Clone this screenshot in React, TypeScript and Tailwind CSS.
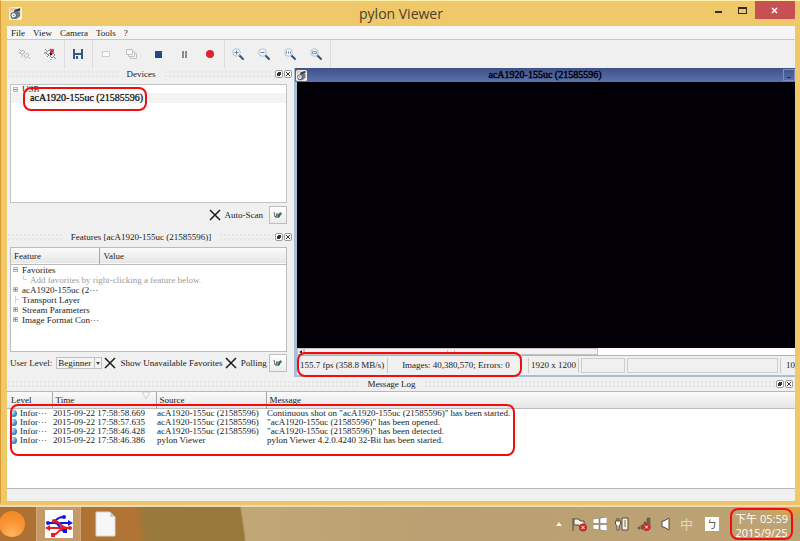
import type { ReactNode } from 'react';

const features = [
  { mark: '-', name: 'Favorites' },
  { mark: '+', name: 'acA1920-155uc (2···' },
  { mark: '', name: 'Transport Layer' },
  { mark: '+', name: 'Stream Parameters' },
  { mark: '+', name: 'Image Format Con···' },
];

const messages = [
  { time: '2015-09-22 17:58:58.669', source: 'acA1920-155uc (21585596)', text: 'Continuous shot on "acA1920-155uc (21585596)" has been started.' },
  { time: '2015-09-22 17:58:57.635', source: 'acA1920-155uc (21585596)', text: '"acA1920-155uc (21585596)" has been opened.' },
  { time: '2015-09-22 17:58:46.428', source: 'acA1920-155uc (21585596)', text: '"acA1920-155uc (21585596)" has been detected.' },
  { time: '2015-09-22 17:58:46.386', source: 'pylon Viewer', text: 'pylon Viewer 4.2.0.4240 32-Bit has been started.' },
];

function CameraIcon({ className }: { className: string }) {
  return (
    <svg viewBox="0 0 14 14" className={className} aria-hidden="true">
      <rect width="14" height="14" rx="2" fill="#f7efe2" />
      <path d="M1 1h7L1 6z" fill="#f1c79a" />
      <path d="M2 7l4-2h6v5l-4 3H3z" fill="#6b7a87" />
      <path d="M6 3l6-2v3l-3 1H5z" fill="#35414c" />
      <circle cx="5" cy="9" r="3" fill="#f2f6f9" stroke="#3c4954" />
      <circle cx="5" cy="9" r="1" fill="#7d92a4" />
    </svg>
  );
}

function ConnectIcon({ active }: { active?: boolean }) {
  return (
    <svg viewBox="0 0 14 14" className="size-3.5" fill="none" aria-hidden="true">
      <path d="M2 2l2 2M3 6l3-3 2 2-3 3zM7 9l3-3 2 2-3 3zM11 10l2 2" stroke={active ? '#8b9299' : '#b3b7bb'} />
      <path d="M4 10l2-2M1 6h2M8 12v1" stroke={active ? '#6c757d' : '#c2c5c8'} />
      {active && <path d="M7 2l3 3M10 2v3H7" stroke="#d22032" strokeWidth="1.5" />}
      {active && <circle cx="8" cy="7" r="1.3" fill="#20242a" />}
    </svg>
  );
}

function ZoomIcon({ sign }: { sign: string }) {
  return (
    <svg viewBox="0 0 14 14" className="size-3.5" fill="none" aria-hidden="true">
      <path d="M8.5 8.5 12 12" stroke="#2f567f" strokeWidth="2" strokeLinecap="round" />
      <circle cx="5.5" cy="5.5" r="3.8" fill="#eef4f8" stroke="#b5c3ce" />
      {sign === '+' && <path d="M3.5 5.5h4M5.5 3.5v4" stroke="#5f86ad" />}
      {sign === '-' && <path d="M3.5 5.5h4" stroke="#5f86ad" />}
      {sign === '1' && <path d="M3 5.5h1M5 5.5h1M7 5.5h1" stroke="#5f86ad" strokeWidth="2" />}
      {sign === 'fit' && <path d="M3.5 4.5h4v2h-4z" stroke="#7c9ab5" />}
    </svg>
  );
}

function ToolButton({ label, children }: { label: string; children: ReactNode }) {
  return (
    <button type="button" aria-label={label} className="flex h-6 w-[26px] items-center justify-center">
      {children}
    </button>
  );
}

function Separator() {
  return <span className="ml-px w-px self-stretch bg-[#dcdcdc]" />;
}

function Grip() {
  return <span className="h-2 flex-1 bg-[radial-gradient(#e5e5e5_1px,transparent_1px)] bg-[size:4px_4px]" />;
}

function DockButtons() {
  return (
    <span className="flex gap-px">
      <button type="button" aria-label="Float" className="flex size-2 items-center justify-center rounded-xs border border-[#9a9a9a] bg-white">
        <svg viewBox="0 0 6 6" className="size-1.5" aria-hidden="true"><path d="M2 1h3v3H4v1H1V2h1z" fill="#333" /></svg>
      </button>
      <button type="button" aria-label="Close panel" className="flex size-2 items-center justify-center rounded-xs border border-[#9a9a9a] bg-white">
        <svg viewBox="0 0 6 6" className="size-1.5" aria-hidden="true"><path d="M1 1l4 4M5 1 1 5" stroke="#333" /></svg>
      </button>
    </span>
  );
}

function DockTitle({ title }: { title: string }) {
  return (
    <div className="flex h-3 items-center pr-0.5">
      <Grip />
      <h2 className="px-2">{title}</h2>
      <Grip />
      <DockButtons />
    </div>
  );
}

function CrossCheck({ label }: { label: string }) {
  return (
    <label className="flex items-center gap-1 whitespace-nowrap">
      <span className="relative size-3">
        <input type="checkbox" defaultChecked className="peer block size-3 appearance-none" />
        <svg viewBox="0 0 12 12" className="pointer-events-none absolute inset-0 hidden size-3 peer-checked:block" aria-hidden="true">
          <path d="M1 1l10 10M11 1 1 11" stroke="#1c1c1c" strokeWidth="1.5" />
        </svg>
      </span>
      {label}
    </label>
  );
}

function RefreshButton({ label }: { label: string }) {
  return (
    <button type="button" aria-label={label} className="flex size-[18px] items-center justify-center border border-[#bdbdbd] bg-linear-to-b from-white to-[#ececec]">
      <svg viewBox="0 0 10 10" className="size-2.5" aria-hidden="true">
        <path d="M1 2l1 5 2-1V3M3 8l1-4" stroke="#5c6660" fill="none" />
        <path d="M5 4l3-2 1 2-2 2-1 2H4z" fill="#4b8f5c" />
        <path d="M6 4h2M5 6h2" stroke="#33473a" />
      </svg>
    </button>
  );
}

function TreeMark({ mark }: { mark: string }) {
  return (
    <svg viewBox="0 0 7 7" className="size-[7px] shrink-0" fill="none" aria-hidden="true">
      {mark === '' ? (
        <path d="M3.5 0v7M3.5 3.5H7" stroke="#d5d5d5" />
      ) : (
        <>
          <rect x="1.500" y="1.500" width="4" height="4" fill="#f6f6f6" stroke="#b8b8b8" />
          <path d={mark === '+' ? 'M2 3.5h3M3.5 2v3' : 'M2 3.5h3'} stroke="#888" />
        </>
      )}
    </svg>
  );
}

function Devices() {
  return (
    <section className="flex flex-1 flex-col">
      <DockTitle title="Devices" />
      <ul className="mt-1 mr-[7px] ml-[3px] flex-1 border border-[#c4c4c4] bg-white">
        <li>
          <span className="flex h-2 items-center gap-[3px] pl-px">
            <TreeMark mark="-" />USB
          </span>
          <ul>
            <li className="relative h-[10px] bg-[#f3f3f3] pl-[19px] text-[10px] text-black [-webkit-text-stroke:0.2px_black]">
              acA1920-155uc (21585596)
              <span className="pointer-events-none absolute -top-1.5 left-3 h-6 w-[124px] rounded-lg border-2 border-[#f20d0d]" />
            </li>
          </ul>
        </li>
      </ul>
      <div className="mr-[7px] flex h-6 items-center justify-end gap-1.5">
        <CrossCheck label="Auto-Scan" />
        <RefreshButton label="Refresh devices" />
      </div>
    </section>
  );
}

function Features() {
  return (
    <section className="pt-1 pb-[3px]">
      <DockTitle title="Features [acA1920-155uc (21585596)]" />
      <div className="mt-1 mr-[7px] ml-[3px] min-h-[105px] border border-[#bcbcbc] bg-white">
        <table className="w-full table-fixed border-collapse text-left">
          <thead>
            <tr className="h-4 border-b border-[#bcbcbc] bg-linear-to-b from-[#fafafa] to-[#e6e6e6]">
              <th className="w-[88px] border-r border-[#a8a8a8] p-0 pl-[3px] font-normal">Feature</th>
              <th className="p-0 pl-1 font-normal">Value</th>
            </tr>
          </thead>
          <tbody>
            {features.map((feature) => [
              <tr key={feature.name} className="h-[10px]">
                <td colSpan={2} className="p-0">
                  <span className="flex items-center gap-[3px] pl-px"><TreeMark mark={feature.mark} />{feature.name}</span>
                </td>
              </tr>,
              feature.name === 'Favorites' && (
                <tr key="hint" className="h-[10px] text-[#9b9b9b]">
                  <td colSpan={2} className="p-0">
                    <span className="flex items-center gap-[3px] pl-3">
                      <span className="-mt-1 h-1 w-1 border-b border-l border-[#d0d0d0]" />
                      Add favorites by right-clicking a feature below.
                    </span>
                  </td>
                </tr>
              ),
            ])}
          </tbody>
        </table>
      </div>
      <div className="mr-[7px] ml-[3px] flex h-[22px] items-center justify-between">
        <label className="flex items-center gap-1 whitespace-nowrap">
          User Level:
          <span className="relative">
            <select className="block h-3 w-[46px] appearance-none border border-[#c0c0c0] bg-[#f4f4f4] pl-px leading-[10px]">
              <option>Beginner</option>
            </select>
            <span className="pointer-events-none absolute inset-y-0 right-0 flex w-2 items-center justify-center border border-[#c0c0c0] bg-[#f4f4f4]">
              <svg viewBox="0 0 4 3" className="h-[3px] w-1" aria-hidden="true"><path d="M0 0h4L2 3z" fill="#444" /></svg>
            </span>
          </span>
        </label>
        <CrossCheck label="Show Unavailable Favorites" />
        <CrossCheck label="Polling" />
        <RefreshButton label="Refresh features" />
      </div>
    </section>
  );
}

function ImageWindow() {
  return (
    <section className="flex min-w-0 flex-1 flex-col border-b-2 border-l-[3px] border-[#a5bfd8]">
      <header className="-ml-0.5 flex h-3.5 items-center bg-linear-to-b from-[#405088] to-[#5a73ae] pl-px text-black">
        <CameraIcon className="size-[11px]" />
        <h2 className="flex-1 text-center text-[10px] [-webkit-text-stroke:0.4px_black]">acA1920-155uc (21585596)</h2>
        <button type="button" aria-label="Minimize camera" className="flex h-3 w-3 items-end justify-center border border-[#7b8ec1] pb-0.5">
          <span className="h-px w-1 bg-[#1e2850]" />
        </button>
      </header>
      <div className="flex-1 bg-[#020006]" />
      <div className="flex h-[7px] bg-white">
        <span className="flex w-[7px] items-center justify-center border border-[#c4c4c4] bg-[#f2f2f2]">
          <svg viewBox="0 0 3 4" className="h-1 w-[3px]" aria-hidden="true"><path d="M3 0v4L0 2z" fill="#333" /></svg>
        </span>
        <span className="flex w-[59%] items-center justify-center border border-[#c4c4c4] bg-[#f2f2f2]">
          <span className="h-1 w-2 border-x border-dotted border-[#bbb]" />
        </span>
      </div>
      <footer className="relative flex h-5 items-stretch border-t border-[#9db9d2] bg-[#f0f0f0] py-0.5 whitespace-nowrap">
        <span className="w-[91px] shrink-0 border-r border-[#c9c9c9] pl-[3px] leading-[15px]">155.7 fps (358.8 MB/s)</span>
        <span className="w-[140px] shrink-0 pr-1 text-center leading-[15px]">Images: 40,380,570; Errors: 0</span>
        <span className="w-[51px] shrink-0 border-x border-[#c9c9c9] text-center leading-[15px]">1920 x 1200</span>
        <span className="ml-0.5 w-11 shrink-0 border border-[#cecece]" />
        <span className="ml-0.5 flex-1 border border-[#cecece]" />
        <span className="ml-0.5 shrink-0 border-l border-[#c9c9c9] pl-[5px] leading-[15px]">10</span>
        <span className="pointer-events-none absolute -top-1 left-0 h-[25px] w-[225px] rounded-lg border-2 border-[#f20d0d]" />
      </footer>
    </section>
  );
}

function MessageLog() {
  return (
    <section>
      <div className="pt-px">
        <DockTitle title="Message Log" />
      </div>
      <div className="relative mt-px min-h-[98px] border-t border-b border-[#b8b8b8] bg-white">
        <table className="w-full table-fixed border-collapse text-left">
          <thead>
            <tr className="h-4 border-b border-[#bcbcbc] bg-linear-to-b from-[#fafafa] to-[#e6e6e6] leading-4">
              <th className="w-[45px] border-r border-[#a8a8a8] p-0 pl-1 font-normal">Level</th>
              <th className="w-[104px] border-r border-[#a8a8a8] p-0 pl-[3px] font-normal">
                <span className="flex items-start justify-between pr-1.5">
                  Time
                  <svg viewBox="0 0 8 8" className="size-2" aria-hidden="true"><path d="M0 0h8L4 7z" fill="#f8f8f8" stroke="#ccc" /></svg>
                </span>
              </th>
              <th className="w-[110px] border-r border-[#a8a8a8] p-0 pl-[3px] font-normal">Source</th>
              <th className="p-0 pl-[3px] font-normal">Message</th>
            </tr>
          </thead>
          <tbody className="leading-[9px] whitespace-nowrap">
            {messages.map((message) => (
              <tr key={message.time}>
                <td className="p-0 pl-[3px]">
                  <span className="flex items-center gap-[3px]">
                    <span className="size-[7px] rounded-full bg-[radial-gradient(circle_at_30%_30%,#d8ecfa,#3577b5_70%)]" />
                    Infor···
                  </span>
                </td>
                <td className="p-0 pl-px">{message.time}</td>
                <td className="p-0 pl-px">{message.source}</td>
                <td className="p-0 pl-px">{message.text}</td>
              </tr>
            ))}
          </tbody>
        </table>
        <span className="pointer-events-none absolute top-3 left-[3px] h-[52px] w-[505px] rounded-lg border-2 border-[#f20d0d]" />
      </div>
      <div className="h-3" />
    </section>
  );
}

function Taskbar() {
  return (
    <footer className="flex h-9 items-center border-t-2 border-[#ead9c4] bg-[radial-gradient(ellipse_50px_12px_at_100%_0,#eba62e,transparent),linear-gradient(82deg,#ad7033_0,#b07433_138px,#9a793c_146px,#99783b_242px,#c0a775_244px,#b9a072_55%,#bda374_100%)]">
      <button type="button" aria-label="Media player" className="-ml-px size-[26px] rounded-full bg-[radial-gradient(circle_at_50%_90%,#ffb560,#fa9332_50%,#ee8526)]" />
      <button type="button" aria-label="pylon USB" className="ml-[11px] flex h-full w-[45px] items-center justify-center border-x border-[#d0a878] bg-[#c69a66]">
        <svg viewBox="0 0 28 28" className="size-7" fill="none" aria-hidden="true">
          <path d="M0 0h28v28H0z" fill="#fff" />
          <path d="M3 13h22M6 13c4 0 5-6 12-6M10 13c5 0 4 7 9 8" stroke="#1116e4" strokeWidth="2" />
          <path d="M3 18h22M22 18c-7 0-6-7-13-7M20 18c-6 0-6 6-12 7" stroke="#ef1920" strokeWidth="2" />
          <path d="M23 10l5 3-5 3zM18 19h4v4h-4z" fill="#1116e4" />
          <path d="M5 15l-5 3 5 3zM6 23h4v4H6z" fill="#ef1920" />
          <circle cx="3" cy="13" r="2" fill="#1116e4" />
          <circle cx="19" cy="7" r="2" fill="#1116e4" />
          <circle cx="25" cy="18" r="2" fill="#ef1920" />
          <circle cx="9" cy="11" r="2" fill="#ef1920" />
        </svg>
      </button>
      <button type="button" aria-label="Document" className="ml-[14px]">
        <svg viewBox="0 0 21 26" className="h-[26px] w-[21px]" aria-hidden="true">
          <path d="M1 1h14l5 5v19H1z" fill="#f7f7f7" stroke="#d9d4cc" />
          <path d="M15 1v5h5z" fill="#ccc" />
        </svg>
      </button>
      <div className="ml-auto flex items-center gap-2 pr-3">
        <svg viewBox="0 0 6 4" className="mr-0.5 h-1 w-1.5" aria-hidden="true"><path d="M3 0l3 4H0z" fill="#f6f2ea" /></svg>
        <svg viewBox="0 0 15 15" className="-mr-0.5 size-[15px]" fill="none" aria-hidden="true">
          <path d="M1 1v13M2 2h5l1 2h4v6H8L7 8H2z" fill="#f8f4ec" stroke="#554b3a" />
          <circle cx="11" cy="10.5" r="4" fill="#c92a2e" />
          <path d="M9.5 9l3 3M12.5 9l-3 3" stroke="#fff" />
        </svg>
        <svg viewBox="0 0 14 14" className="size-3.5" aria-hidden="true">
          <path d="M0 2l6-1v5.5H0zM7 1l7-1v6.500H7zM0 7.500h6V13l-6-1zM7 7.500h7V14l-7-1z" fill="#fff" stroke="#6f634b" strokeWidth=".5" />
        </svg>
        <svg viewBox="0 0 14 14" className="size-3.5" aria-hidden="true">
          <path d="M7 1h6v12H7z" fill="#f4efe6" stroke="#554b3a" />
          <path d="M9 3h2v7H9z" fill="#b9ad95" />
          <path d="M0.500 4h5v3L4 9v4H2V9L.5 7z" fill="#fff" stroke="#554b3a" />
          <path d="M2 1v3M4 1v3" stroke="#554b3a" />
        </svg>
        <svg viewBox="0 0 14 14" className="size-3.5" aria-hidden="true">
          <path d="M1 12v-2h2v2zM4 12V8h2v4zM7 12V5h2v7zM10 12V1h3v11z" fill="#756850" stroke="#51452f" strokeWidth=".5" />
          <circle cx="9.500" cy="10" r="4" fill="#c92a2e" />
          <path d="M8 8.500l3 3M11 8.500l-3 3" stroke="#fff" />
        </svg>
        <svg viewBox="0 0 9 14" className="mx-0.5 h-3.5 w-[9px]" aria-hidden="true">
          <path d="M1 4h2l5-3v12l-5-3H1z" fill="#fff" stroke="#554b3a" />
        </svg>
        <span className="font-['Noto_Sans_CJK_TC',sans-serif] text-[13px] leading-4 text-[#e2d8c6]">中</span>
        <span className="ml-1 flex size-3.5 items-center justify-center bg-white font-['Noto_Sans_CJK_TC',sans-serif] text-[10px] leading-3 text-[#463e30]">ㄅ</span>
        <time className="relative ml-2 pt-1 text-center font-['Open_Sans','Noto_Sans_CJK_TC',sans-serif] text-[11px] leading-[14px] whitespace-nowrap text-white">
          下午 05:59<br />2015/9/25
          <span className="pointer-events-none absolute -inset-x-[5px] inset-y-0 rounded-lg border-2 border-[#f20d0d]" />
        </time>
      </div>
    </footer>
  );
}

export default function App() {
  return (
    <div className="flex min-h-screen flex-col overflow-hidden font-['Liberation_Serif','Noto_Sans_CJK_TC',serif] text-[9px] leading-[10px] text-[#222]">
      <div className="flex flex-1 flex-col border-t border-b-4 border-l border-t-[#fff1ae] border-b-[#edc466] border-l-[#d99a31] bg-[#efc869] pr-[5px] pl-1.5">
        <header className="grid h-[25px] grid-cols-3 items-center">
          <CameraIcon className="ml-0.5 size-[13px]" />
          <h1 className="text-center font-['Open_Sans',sans-serif] text-[14px] leading-5 text-[#4b4029]">pylon Viewer</h1>
          <div className="flex justify-end self-start">
            <button type="button" aria-label="Minimize" className="flex h-[18px] w-6 items-center justify-center">
              <span className="mt-1 h-0.5 w-[7px] bg-[#332b1c]" />
            </button>
            <button type="button" aria-label="Maximize" className="flex h-[18px] w-6 items-center justify-center">
              <span className="h-[7px] w-[9px] border border-t-2 border-[#332b1c]" />
            </button>
            <button type="button" aria-label="Close" className="flex h-[18px] w-10 items-center justify-center bg-[#c75052]">
              <svg viewBox="0 0 7 7" className="size-[7px]" aria-hidden="true"><path d="M1 1l5 5M6 1 1 6" stroke="#fff" strokeWidth="1.5" /></svg>
            </button>
          </div>
        </header>
        <div className="flex flex-1 flex-col bg-[#f0f0f0]">
          <nav className="flex h-3.5 items-center gap-2 border-b border-[#c8c8c8] bg-[#f5f5f5] pl-1">
            {['File', 'View', 'Camera', 'Tools', '?'].map((item) => (
              <button key={item} type="button">{item}</button>
            ))}
          </nav>
          <div className="flex h-7 items-center pl-1" role="toolbar" aria-label="Camera tools">
            <ToolButton label="Open camera"><ConnectIcon /></ToolButton>
            <ToolButton label="Close camera"><ConnectIcon active /></ToolButton>
            <Separator />
            <ToolButton label="Save image">
              <svg viewBox="0 0 12 12" className="size-3" aria-hidden="true">
                <path d="M1 1h10v10H1z" fill="#365a82" />
                <path d="M3 1h6v4H3zM3 7h6v4H3z" fill="#e8edf2" />
                <path d="M4 8h2v3H4z" fill="#365a82" />
              </svg>
            </ToolButton>
            <Separator />
            <ToolButton label="Single shot"><span className="h-1.5 w-2 border border-[#cfcfcf] bg-[#fafafa]" /></ToolButton>
            <ToolButton label="Continuous shot">
              <svg viewBox="0 0 12 10" className="h-2.5 w-3" fill="#f6f6f6" stroke="#c2c2c2" aria-hidden="true">
                <path d="M4.500 4.500h6v5h-6z" />
                <path d="M2.500 2.500h6v5h-6z" />
                <path d="M.5.5h6v5h-6z" />
              </svg>
            </ToolButton>
            <ToolButton label="Stop"><span className="size-[7px] bg-[#1e4b86]" /></ToolButton>
            <ToolButton label="Pause"><span className="h-[7px] w-[5px] border-x-2 border-[#8b8b8b]" /></ToolButton>
            <ToolButton label="Record"><span className="size-2 rounded-full bg-[#df2330]" /></ToolButton>
            <Separator />
            <ToolButton label="Zoom in"><ZoomIcon sign="+" /></ToolButton>
            <ToolButton label="Zoom out"><ZoomIcon sign="-" /></ToolButton>
            <ToolButton label="Zoom to 100%"><ZoomIcon sign="1" /></ToolButton>
            <ToolButton label="Zoom to fit"><ZoomIcon sign="fit" /></ToolButton>
            <Separator />
          </div>
          <main className="flex flex-1">
            <div className="flex w-[287px] shrink-0 flex-col">
              <Devices />
              <Features />
            </div>
            <ImageWindow />
          </main>
          <MessageLog />
        </div>
      </div>
      <Taskbar />
    </div>
  );
}
